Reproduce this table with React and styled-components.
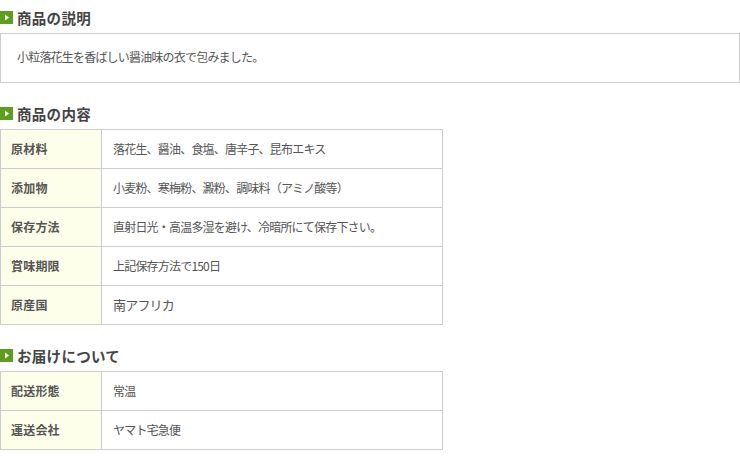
import React from "react";
import styled, { createGlobalStyle } from "styled-components";

const GlobalStyle = createGlobalStyle`
  body {
    margin: 0;
    background: #fff;
    font-family: "Noto Sans CJK JP", "Noto Sans", sans-serif;
    color: #555;
  }
`;

const details = [
  { label: "原材料", value: "落花生、醤油、食塩、唐辛子、昆布エキス" },
  { label: "添加物", value: "小麦粉、寒梅粉、澱粉、調味料（アミノ酸等）" },
  { label: "保存方法", value: "直射日光・高温多湿を避け、冷暗所にて保存下さい。" },
  { label: "賞味期限", value: "上記保存方法で150日" },
  { label: "原産国", value: "南アフリカ", large: true },
];

const delivery = [
  { label: "配送形態", value: "常温" },
  { label: "運送会社", value: "ヤマト宅急便" },
];

function Arrow() {
  return (
    <Icon>
      <svg width="13" height="13" viewBox="0 0 13 13">
        <rect width="13" height="13" fill="#5e9e1c" />
        <path d="M5 3.5 L9 6.5 L5 9.5 Z" fill="#fff" />
      </svg>
    </Icon>
  );
}

function SpecTable({ rows }) {
  return (
    <Table>
      <tbody>
        {rows.map((row) => (
          <tr key={row.label}>
            <Label>{row.label}</Label>
            <Value $large={row.large}>{row.value}</Value>
          </tr>
        ))}
      </tbody>
    </Table>
  );
}

export default function App() {
  return (
    <>
      <GlobalStyle />
      <Page>
        <Section>
          <Heading>
            <Arrow />
            商品の説明
          </Heading>
          <DescBox>小粒落花生を香ばしい醤油味の衣で包みました。</DescBox>
        </Section>

        <Section>
          <Heading>
            <Arrow />
            商品の内容
          </Heading>
          <SpecTable rows={details} />
        </Section>

        <Section>
          <Heading>
            <Arrow />
            お届けについて
          </Heading>
          <SpecTable rows={delivery} />
        </Section>
      </Page>
    </>
  );
}

const Page = styled.div`
  width: 740px;
  padding-top: 11px;
`;

const Section = styled.section`
  & + & {
    margin-top: 24px;
  }
`;

const Heading = styled.h3`
  display: flex;
  align-items: center;
  gap: 4px;
  height: 13px;
  margin: 0 0 9px;
  font-size: 14.5px;
  font-weight: bold;
  color: #444;
  letter-spacing: 0.3px;
  white-space: nowrap;
`;

const Icon = styled.span`
  display: block;
  width: 13px;
  height: 13px;
  flex-shrink: 0;

  svg {
    display: block;
  }
`;

const DescBox = styled.div`
  box-sizing: border-box;
  height: 50px;
  border: 1px solid #ccc;
  display: flex;
  align-items: center;
  padding: 0 16px 3px;
  font-size: 12px;
  letter-spacing: -0.8px;
  color: #555;
`;

const Table = styled.table`
  width: 443px;
  border-collapse: collapse;
  table-layout: fixed;
`;

const Label = styled.th`
  width: 90px;
  height: 36px;
  padding: 0 0 2px 10px;
  box-sizing: content-box;
  border: 1px solid #ccc;
  background: #fdffea;
  text-align: left;
  font-size: 12px;
  font-weight: bold;
  color: #555;
  letter-spacing: 0.2px;
`;

const Value = styled.td`
  height: 36px;
  padding: 0 0 2px 11px;
  border: 1px solid #ccc;
  font-size: ${(p) => (p.$large ? "13px" : "12px")};
  letter-spacing: -0.8px;
  color: #555;
  white-space: nowrap;
`;
